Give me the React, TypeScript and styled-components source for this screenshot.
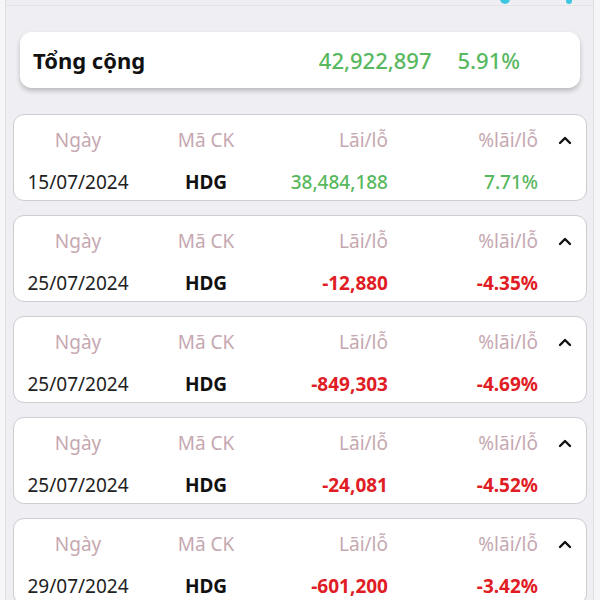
import * as React from "react";
import styled, { createGlobalStyle } from "styled-components";

const GlobalStyle = createGlobalStyle`
  html, body {
    margin: 0;
    padding: 0;
    background: #f5f5f7;
    font-family: "Noto Sans", "Open Sans", sans-serif;
  }
`;

const Frame = styled.div`
  display: flex;
  width: 600px;
  height: 600px;
  overflow: hidden;
`;

const SideStrip = styled.div<{ $side: "left" | "right" }>`
  width: ${(p) => (p.$side === "left" ? "5px" : "6px")};
  background: #f6f6f8;
  ${(p) => (p.$side === "left" ? "border-right" : "border-left")}: 1px solid #dedee2;
`;

const Main = styled.div`
  flex: 1;
  background: #efeff3;
  display: flex;
  flex-direction: column;
  & > * {
    flex-shrink: 0;
  }
`;

const TopBar = styled.div`
  height: 5px;
  border-bottom: 1px solid #e3e3e8;
  display: flex;
  align-items: flex-end;
  padding-left: 494px;
  gap: 56px;
  overflow: hidden;
`;

const TopIcon = styled.div<{ $size: number }>`
  width: ${(p) => p.$size}px;
  height: ${(p) => p.$size}px;
  border-radius: 50%;
  background: #3cc6e0;
  margin-bottom: 1px;
`;

const Summary = styled.div`
  margin: 26px 13px 0 14px;
  height: 56px;
  background: #fff;
  border-radius: 12px;
  box-shadow: 0 3px 5px rgba(0, 0, 0, 0.22);
  display: flex;
  align-items: center;
  padding: 0 60px 0 13px;
  font-size: 22px;
`;

const SummaryLabel = styled.span`
  font-weight: 700;
  color: #111;
  flex: 1;
`;

const SummaryValue = styled.span<{ $gap?: number }>`
  color: #58b85e;
  font-weight: 500;
  margin-left: ${(p) => p.$gap ?? 0}px;
`;

const List = styled.div`
  display: flex;
  flex-direction: column;
  gap: 14px;
  margin: 26px 6px 0 7px;
`;

const Card = styled.div`
  box-sizing: border-box;
  height: 87px;
  background: #fff;
  border: 1px solid #cdcdd2;
  border-radius: 11px;
  padding-top: 11px;
  display: grid;
  grid-template-columns: 128px 128px 118px 150px 48px;
  grid-template-rows: 28px 28px;
  row-gap: 14px;
  font-size: 19px;
  line-height: 28px;
`;

const Cell = styled.div<{ $align: "center" | "right"; $tone?: string; $weight?: number }>`
  text-align: ${(p) => p.$align};
  color: ${(p) => p.$tone ?? "#222"};
  font-weight: ${(p) => p.$weight ?? 400};
  white-space: nowrap;
`;

const HeadCell = styled(Cell)`
  color: #c6a8b1;
`;

const Chevron = styled.div`
  display: flex;
  align-items: center;
  justify-content: center;
  padding-left: 6px;
`;

type Row = { date: string; code: string; pnl: string; pct: string; up: boolean };

const rows: Row[] = [
  { date: "15/07/2024", code: "HDG", pnl: "38,484,188", pct: "7.71%", up: true },
  { date: "25/07/2024", code: "HDG", pnl: "-12,880", pct: "-4.35%", up: false },
  { date: "25/07/2024", code: "HDG", pnl: "-849,303", pct: "-4.69%", up: false },
  { date: "25/07/2024", code: "HDG", pnl: "-24,081", pct: "-4.52%", up: false },
  { date: "29/07/2024", code: "HDG", pnl: "-601,200", pct: "-3.42%", up: false },
];

const GREEN = "#58b85e";
const RED = "#e01c24";

export default function App() {
  return (
    <>
      <GlobalStyle />
      <Frame>
        <SideStrip $side="left" />
        <Main>
          <TopBar>
            <TopIcon $size={10} />
            <TopIcon $size={6} />
          </TopBar>
          <Summary>
            <SummaryLabel>Tổng cộng</SummaryLabel>
            <SummaryValue>42,922,897</SummaryValue>
            <SummaryValue $gap={26}>5.91%</SummaryValue>
          </Summary>
          <List>
            {rows.map((r, i) => (
              <Card key={i}>
                <HeadCell $align="center">Ngày</HeadCell>
                <HeadCell $align="center">Mã CK</HeadCell>
                <HeadCell $align="right">Lãi/lỗ</HeadCell>
                <HeadCell $align="right">%lãi/lỗ</HeadCell>
                <Chevron>
                  <svg width="14" height="10" viewBox="0 0 14 10">
                    <polyline points="2,8 7,3 12,8" fill="none" stroke="#111" strokeWidth="2.4" strokeLinecap="round" strokeLinejoin="round" />
                  </svg>
                </Chevron>
                <Cell $align="center">{r.date}</Cell>
                <Cell $align="center" $weight={700} $tone="#111">{r.code}</Cell>
                <Cell $align="right" $tone={r.up ? GREEN : RED} $weight={r.up ? 500 : 700}>{r.pnl}</Cell>
                <Cell $align="right" $tone={r.up ? GREEN : RED} $weight={r.up ? 500 : 700}>{r.pct}</Cell>
                <div />
              </Card>
            ))}
          </List>
        </Main>
        <SideStrip $side="right" />
      </Frame>
    </>
  );
}
